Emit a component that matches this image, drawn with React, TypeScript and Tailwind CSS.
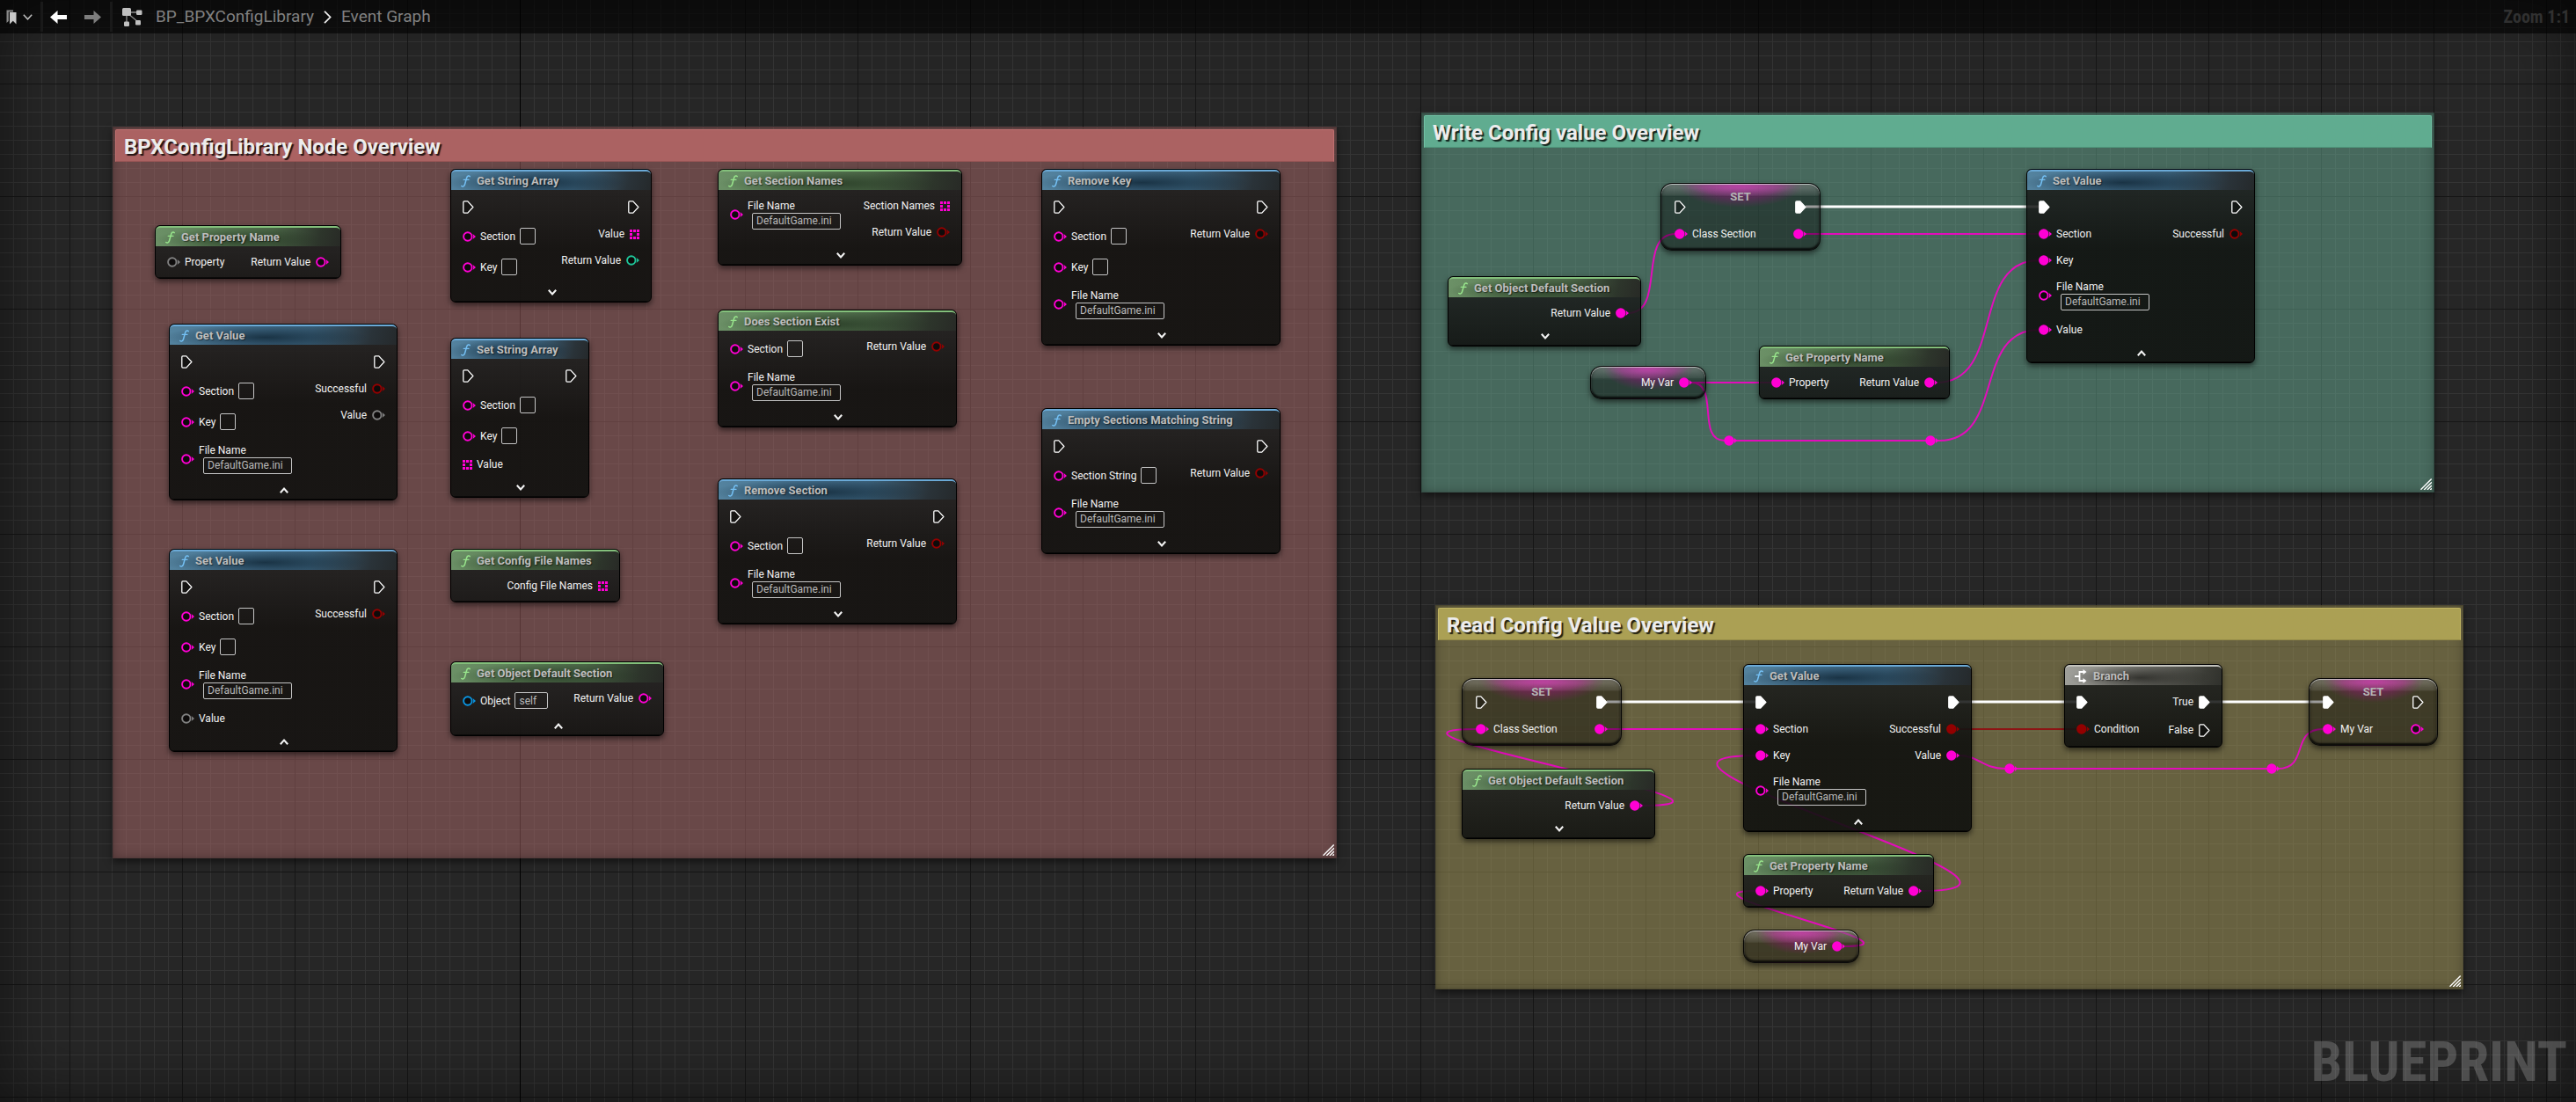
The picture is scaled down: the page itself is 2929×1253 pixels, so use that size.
import React, { useId } from "react";

type PinKind = "exec" | "circle" | "array";
type PinColor = "pink" | "red" | "gray" | "teal" | "blue";

type Pin = {
  label?: string;
  kind?: PinKind;
  color?: PinColor;
  linked?: boolean;
  field?: "empty" | "self" | "file";
};

const PIN_COLORS: Record<PinColor, string> = {
  pink: "#ff00d4",
  red: "#930000",
  gray: "#808080",
  teal: "#1fc79a",
  blue: "#0a94e0",
};

/* ---------- icons ---------- */

function PinIcon({ kind = "circle", color = "pink", linked }: Pin) {
  const c = PIN_COLORS[color];
  if (kind === "exec") {
    return (
      <svg width="13" height="15" viewBox="0 0 13 15" className="shrink-0">
        <path
          d="M1.8 0.9H5.8L11.9 7.5L5.8 14.1H1.8Q0.8 14.1 0.8 13.1V1.9Q0.8 0.9 1.8 0.9Z"
          fill={linked ? "#fff" : "rgba(0,0,0,0.35)"}
          stroke="#fff"
          strokeWidth="1.3"
          strokeLinejoin="round"
        />
      </svg>
    );
  }
  if (kind === "array") {
    return (
      <svg width="11" height="11" viewBox="0 0 11 11" className="shrink-0" fill={c}>
        <path d="M0 0h3v3H0zM4 0h3v3H4zM8 0h3v3H8zM0 4h3v3H0zM8 4h3v3H8zM0 8h3v3H0zM4 8h3v3H4zM8 8h3v3H8z" />
      </svg>
    );
  }
  return (
    <svg width="15" height="12" viewBox="0 0 15 12" className="shrink-0">
      <path d="M11.6 3L15 6L11.6 9Q12.8 6 11.6 3Z" fill={c} />
      {linked ? (
        <circle cx="5.8" cy="6" r="5.7" fill={c} />
      ) : (
        <circle cx="5.8" cy="6" r="4.7" fill="rgba(10,8,8,0.8)" stroke={c} strokeWidth="1.9" />
      )}
    </svg>
  );
}

function FunctionIcon({ color }: { color: string }) {
  return (
    <svg width="11" height="14" viewBox="0 0 11 14" fill="none" stroke={color} strokeLinecap="round">
      <path d="M10.2 1.7C9.6 0.6 7.4 0.4 6.7 3L4.5 10.8C4 12.8 2 13.6 0.8 12.5" strokeWidth="1.5" />
      <path d="M3.2 5.4H9" strokeWidth="1.2" />
    </svg>
  );
}

function BranchIcon() {
  return (
    <svg width="14" height="16" viewBox="0 0 14 16" fill="none" stroke="#fff" strokeWidth="1.8">
      <path d="M0 8H5M10 3H5.5V13H10" />
      <path d="M9.5 0L13.5 3L9.5 6ZM9.5 10L13.5 13L9.5 16Z" fill="#fff" stroke="none" />
    </svg>
  );
}

function Expander({ open }: { open: boolean }) {
  return (
    <button type="button" aria-label={open ? "Collapse node" : "Expand node"} className="flex h-[22px] w-full items-center justify-center pl-[2px]">
      <svg width="10" height="7" viewBox="0 0 10 7" fill="none" stroke="#f2f2f2" strokeWidth="2.1">
        <path d={open ? "M0.8 6.2L5 1.6L9.2 6.2" : "M0.8 0.8L5 5.4L9.2 0.8"} />
      </svg>
    </button>
  );
}

/* ---------- pins ---------- */

const FIELD = "h-[19px] rounded-[2px] border border-[#c4c4c4] bg-transparent text-[12px] leading-[17px] text-[#b9b9b9] outline-none";

function InputPin(pin: Pin) {
  const id = useId();
  if (pin.field === "file") {
    return (
      <div className="flex h-[49px] items-center gap-[5px]">
        <PinIcon {...pin} />
        <div className="flex flex-col">
          <label htmlFor={id} className="leading-[15px]">{pin.label}</label>
          <input id={id} defaultValue="DefaultGame.ini" className={`${FIELD} ml-[5px] w-[101px] pl-1`} />
        </div>
      </div>
    );
  }
  if (pin.field) {
    return (
      <div className="flex h-[35px] items-center gap-[5px]">
        <PinIcon {...pin} />
        <label htmlFor={id}>{pin.label}</label>
        <input
          id={id}
          defaultValue={pin.field === "self" ? "self" : ""}
          className={`${FIELD} ${pin.field === "self" ? "w-[38px] pl-1" : "w-[18px]"}`}
        />
      </div>
    );
  }
  return (
    <div className={`flex items-center gap-[5px] ${pin.kind === "exec" ? "h-8" : "h-[30px]"}`}>
      <PinIcon {...pin} />
      {pin.label && <span>{pin.label}</span>}
    </div>
  );
}

function OutputPin(pin: Pin) {
  return (
    <div className={`flex items-center justify-end gap-[6px] ${pin.kind === "exec" ? "h-8" : "h-[30px]"}`}>
      {pin.label && <span>{pin.label}</span>}
      <PinIcon {...pin} />
    </div>
  );
}

function Pins({ inputs, outputs }: { inputs: Pin[]; outputs: Pin[] }) {
  return (
    <div className="flex justify-between whitespace-nowrap">
      <div>{inputs.map((p, i) => <InputPin key={i} {...p} />)}</div>
      <div>{outputs.map((p, i) => <OutputPin key={i} {...p} />)}</div>
    </div>
  );
}

/* ---------- nodes ---------- */

const HEADERS = {
  blue: {
    bar: "border-t-[#6aa9d6] bg-[radial-gradient(ellipse_45%_70%_at_42%_60%,rgba(12,32,46,0.75),transparent),linear-gradient(105deg,#54839f_0%,#46718f_35%,#3b6079_62%,#2a3339_88%,#25292b_100%)]",
    icon: "#74c0f4",
  },
  green: {
    bar: "border-t-[#83bf7b] bg-[radial-gradient(ellipse_45%_70%_at_45%_65%,rgba(28,44,26,0.7),transparent),linear-gradient(105deg,#6c9167_0%,#5c7f57_35%,#4b6647_62%,#2d352b_88%,#282a26_100%)]",
    icon: "#98e58c",
  },
  gray: {
    bar: "border-t-[#c2c2bd] bg-[radial-gradient(ellipse_45%_70%_at_48%_60%,rgba(30,30,26,0.75),transparent),linear-gradient(105deg,#a0a09b_0%,#85857f_35%,#64645e_62%,#3b3c36_88%,#30312c_100%)]",
    icon: "#ffffff",
  },
};

type NodeProps = {
  at: string;
  title: string;
  tone: keyof typeof HEADERS;
  inputs?: Pin[];
  outputs?: Pin[];
  expander?: "open" | "closed";
};

function GraphNode({ at, title, tone, inputs = [], outputs = [], expander }: NodeProps) {
  const header = HEADERS[tone];
  return (
    <article
      className={`absolute overflow-hidden rounded-[6px] border border-black bg-[linear-gradient(to_bottom,rgba(27,29,28,0.88)_24px,rgba(15,16,14,0.9)_90px)] shadow-[0_3px_6px_rgba(0,0,0,0.55)] ${at}`}
    >
      <header className={`flex h-[23px] items-center gap-[7px] rounded-t-[5px] border-t-2 pl-[11px] ${header.bar}`}>
        {tone === "gray" ? <BranchIcon /> : <FunctionIcon color={header.icon} />}
        <h3 className="text-[13px] leading-4 font-bold whitespace-nowrap text-[#bdbdbd] [text-shadow:1px_1px_1px_rgba(0,0,0,0.5)]">{title}</h3>
      </header>
      <div className="px-[13px] pt-[3px]">
        <Pins inputs={inputs} outputs={outputs} />
      </div>
      {expander ? <Expander open={expander === "open"} /> : <div className="h-[3px]" />}
      <div className="-mt-px h-px bg-black/60" />
    </article>
  );
}

const GLASS =
  "absolute rounded-[13px] border border-black/90 bg-[radial-gradient(ellipse_36%_15px_at_50%_0,rgba(255,60,220,0.6),transparent),radial-gradient(ellipse_40%_27px_at_50%_0,rgba(200,0,160,0.28)_60%,transparent),linear-gradient(to_bottom,rgba(255,255,255,0.3)_0,rgba(255,255,255,0.08)_13px,transparent_14px),linear-gradient(rgba(0,0,0,0.38),rgba(0,0,0,0.4))] shadow-[inset_0_1px_1px_rgba(255,255,255,0.65),inset_0_-2px_2px_rgba(0,0,0,0.75),inset_0_0_4px_rgba(0,0,0,0.5),0_3px_6px_rgba(0,0,0,0.55)]";

function SetNode({ at, inputs, outputs }: { at: string; inputs: Pin[]; outputs: Pin[] }) {
  return (
    <article className={`${GLASS} px-[15px] pt-[10px] pb-[3px] ${at}`}>
      <h3 className="absolute inset-x-0 top-[7px] text-center text-[13px] leading-4 font-bold text-[#b4b4b4]">SET</h3>
      <Pins inputs={inputs} outputs={outputs} />
    </article>
  );
}

function VariableNode({ at }: { at: string }) {
  return (
    <article className={`${GLASS} px-[15px] py-[3px] ${at}`}>
      <Pins inputs={[]} outputs={[{ label: "My Var", linked: true }]} />
    </article>
  );
}

function Comment({ at, title, body, bar }: { at: string; title: string; body: string; bar: string }) {
  return (
    <section className={`absolute p-[3px] shadow-[inset_0_0_0_1px_rgba(0,0,0,0.12),inset_0_0_12px_rgba(0,0,0,0.3),0_4px_8px_rgba(0,0,0,0.5)] ${body} ${at}`}>
      <div className={`flex h-[37px] items-center rounded-t-[2px] border px-[9px] pt-[2px] ${bar}`}>
        <h2 className="text-[24px] leading-7 font-bold text-[#ececec] [text-shadow:2px_2px_1px_rgba(0,0,0,0.8)]">{title}</h2>
      </div>
      <svg width="13" height="13" viewBox="0 0 13 13" className="absolute right-[3px] bottom-[3px]" stroke="#fff" strokeWidth="1.4">
        <path d="M0.5 12.7L12.7 0.5M4.2 13L13 4.2M7.9 13L13 7.9M11.3 13L13 11.3" />
      </svg>
    </section>
  );
}

/* ---------- wires ---------- */

function Reroute({ x, y }: { x: number; y: number }) {
  return (
    <g fill="#ff00d4">
      <circle cx={x} cy={y} r="5.7" />
      <path d={`M${x + 6} ${y - 3}L${x + 9} ${y}L${x + 6} ${y + 3}Z`} />
    </g>
  );
}

function Wires() {
  return (
    <svg aria-hidden="true" className="absolute inset-0 h-full w-full" fill="none">
      <g stroke="#fff" strokeWidth="3">
        <path d="M2053 235H2320" />
        <path d="M1827 798H1998M2227 798H2362M2512 798H2642" />
      </g>
      <path d="M2227 829H2362" stroke="#8d1414" strokeWidth="2" />
      <g stroke="#e30cbb" strokeWidth="2">
        <path d="M2053 266H2320" />
        <path d="M1851 356C1895 356 1861 266 1905 266" />
        <path d="M1923 435H2015" />
        <path d="M1923 435C1956 435 1928 501 1961 501H2195" />
        <path d="M2201 501H2205C2280 501 2243 375 2318 375" />
        <path d="M2202 435C2280 435 2240 296 2318 296" />
        <path d="M1827 829H1998" />
        <path d="M1867 916C2040 916 1508 829 1680 829" />
        <path d="M2184 1013C2393 1013 1788 859 1997 859" />
        <path d="M2098 1076C2200 1076 1894 1013 1996 1013" />
        <path d="M2227 859C2250 859 2254 874 2280 874H2590C2626 874 2604 829 2641 829" />
      </g>
      <Reroute x={1966} y={501} />
      <Reroute x={2195} y={501} />
      <Reroute x={2285} y={874} />
      <Reroute x={2583} y={874} />
    </svg>
  );
}

/* ---------- toolbar ---------- */

function Toolbar() {
  return (
    <header className="relative z-10 flex h-[38px] items-center bg-black/60 pr-[7px] text-[19px] leading-6 text-[#808080]">
      <button type="button" aria-label="Bookmarks" className="flex items-center gap-[7px] pl-[7px]">
        <svg width="12" height="17" viewBox="0 0 12 17">
          <path d="M0.5 0.5H8V2.5H2.8V13L0.5 15Z" fill="#8a8a8a" />
          <path d="M4 3H11.5V16.5L7.8 12.8L4 16.5Z" fill="#c8c8c8" />
        </svg>
        <svg width="11" height="7" viewBox="0 0 11 7" fill="none" stroke="#c0c0c0" strokeWidth="1.5">
          <path d="M0.8 0.8L5.5 5.8L10.2 0.8" />
        </svg>
      </button>
      <div className="ml-[9px] h-[34px] w-[3px] bg-[#191919]" />
      <button type="button" aria-label="Back" className="ml-2">
        <svg width="19" height="15" viewBox="0 0 19 15" fill="#fff">
          <path d="M0 7.5L8.5 0V5H19V10H8.5V15Z" />
        </svg>
      </button>
      <button type="button" aria-label="Forward" className="ml-5">
        <svg width="19" height="15" viewBox="0 0 19 15" fill="#7d7d7d">
          <path d="M19 7.5L10.5 0V5H0V10H10.5V15Z" />
        </svg>
      </button>
      <div className="ml-[10px] h-[34px] w-[3px] bg-[#191919]" />
      <nav aria-label="Breadcrumb" className="flex items-center">
        <svg width="23" height="21" viewBox="0 0 23 21" className="ml-[11px]">
          <path d="M5 5H18M5 5V17M6 6L18 16" stroke="#8a8a8a" strokeWidth="1.3" fill="none" />
          <g fill="#c0c0c0">
            <rect x="0" y="0" width="10" height="9" rx="1.5" />
            <rect x="16" y="2.5" width="6.5" height="5.5" rx="1.2" />
            <rect x="2" y="15.5" width="6" height="5.5" rx="1.2" />
            <rect x="15" y="14" width="6" height="5.5" rx="1.2" />
          </g>
        </svg>
        <a href="#library" className="ml-[15px]">BP_BPXConfigLibrary</a>
        <svg width="9" height="15" viewBox="0 0 9 15" fill="none" stroke="#f0f0f0" strokeWidth="1.7" className="mx-[11px]">
          <path d="M1 0.8L7.6 7.5L1 14.2" />
        </svg>
        <a href="#graph">Event Graph</a>
      </nav>
      <div className="ml-auto font-['Roboto_Condensed','Roboto',sans-serif] text-[20px] font-bold text-[#303030]">Zoom 1:1</div>
    </header>
  );
}

/* ---------- graph ---------- */

const exec: Pin = { kind: "exec" };
const execLinked: Pin = { kind: "exec", linked: true };
const section: Pin = { label: "Section", field: "empty" };
const key: Pin = { label: "Key", field: "empty" };
const file: Pin = { label: "File Name", field: "file" };
const returnBool: Pin = { label: "Return Value", color: "red" };

export default function App() {
  return (
    <main className="relative h-screen min-h-full w-full overflow-hidden bg-[#262626] font-['Roboto',sans-serif] text-[12px] leading-4 text-[#f2f2f2]">
      <div className="absolute inset-0 bg-[linear-gradient(to_right,#161616_1px,transparent_1px),linear-gradient(to_bottom,#161616_1px,transparent_1px),linear-gradient(to_right,#343434_1px,transparent_1px),linear-gradient(to_bottom,#343434_1px,transparent_1px)] [background-position:79px_0,0_95px,15px_0,0_15px] [background-size:128px_128px,128px_128px,16px_16px,16px_16px]" />
      <div className="absolute inset-y-0 left-[591px] w-px bg-black" />
      <div className="absolute inset-0 shadow-[inset_0_0_70px_rgba(0,0,0,0.55)]" />
      <Toolbar />
      <div className="pointer-events-none absolute right-[10px] bottom-[7px] font-['Roboto_Condensed','Liberation_Sans_Narrow','Roboto',sans-serif] text-[63px] leading-[76px] font-bold text-white/20">
        BLUEPRINT
      </div>

      <div className="absolute inset-0">
        <Comment at="left-[128px] top-[144px] w-[1392px] h-[832px]" title="BPXConfigLibrary Node Overview" body="bg-[rgba(171,106,106,0.5)]" bar="border-[#c07070] border-b-[#985555] bg-[#ab6262]" />
        <Comment at="left-[1616px] top-[128px] w-[1152px] h-[432px]" title="Write Config value Overview" body="bg-[rgba(104,172,148,0.5)]" bar="border-[#70c2a4] border-b-[#4f967b] bg-[#60ac90]" />
        <Comment at="left-[1632px] top-[688px] w-[1169px] h-[437px]" title="Read Config Value Overview" body="bg-[rgba(168,156,90,0.5)]" bar="border-[#c2b562] border-b-[#958b48] bg-[#aba054]" />

        <Wires />

        <GraphNode at="left-[176px] top-[256px] w-[212px]" title="Get Property Name" tone="green" inputs={[{ label: "Property", color: "gray" }]} outputs={[{ label: "Return Value" }]} />
        <GraphNode at="left-[192px] top-[368px] w-[260px]" title="Get Value" tone="blue" expander="open" inputs={[exec, section, key, file]} outputs={[exec, { label: "Successful", color: "red" }, { label: "Value", color: "gray" }]} />
        <GraphNode at="left-[192px] top-[624px] w-[260px]" title="Set Value" tone="blue" expander="open" inputs={[exec, section, key, file, { label: "Value", color: "gray" }]} outputs={[exec, { label: "Successful", color: "red" }]} />
        <GraphNode at="left-[512px] top-[192px] w-[229px]" title="Get String Array" tone="blue" expander="closed" inputs={[exec, section, key]} outputs={[exec, { label: "Value", kind: "array" }, { label: "Return Value", color: "teal" }]} />
        <GraphNode at="left-[512px] top-[384px] w-[158px]" title="Set String Array" tone="blue" expander="closed" inputs={[exec, section, key, { label: "Value", kind: "array" }]} outputs={[exec]} />
        <GraphNode at="left-[512px] top-[624px] w-[193px]" title="Get Config File Names" tone="green" outputs={[{ label: "Config File Names", kind: "array" }]} />
        <GraphNode at="left-[512px] top-[752px] w-[243px]" title="Get Object Default Section" tone="green" expander="open" inputs={[{ label: "Object", color: "blue", field: "self" }]} outputs={[{ label: "Return Value" }]} />
        <GraphNode at="left-[816px] top-[192px] w-[278px]" title="Get Section Names" tone="green" expander="closed" inputs={[file]} outputs={[{ label: "Section Names", kind: "array" }, returnBool]} />
        <GraphNode at="left-[816px] top-[352px] w-[272px]" title="Does Section Exist" tone="green" expander="closed" inputs={[section, file]} outputs={[returnBool]} />
        <GraphNode at="left-[816px] top-[544px] w-[272px]" title="Remove Section" tone="blue" expander="closed" inputs={[exec, section, file]} outputs={[exec, returnBool]} />
        <GraphNode at="left-[1184px] top-[192px] w-[272px]" title="Remove Key" tone="blue" expander="closed" inputs={[exec, section, key, file]} outputs={[exec, returnBool]} />
        <GraphNode at="left-[1184px] top-[464px] w-[272px]" title="Empty Sections Matching String" tone="blue" expander="closed" inputs={[exec, { label: "Section String", field: "empty" }, file]} outputs={[exec, returnBool]} />

        <SetNode at="left-[1888px] top-[208px] w-[182px]" inputs={[exec, { label: "Class Section", linked: true }]} outputs={[execLinked, { linked: true }]} />
        <GraphNode at="left-[1646px] top-[314px] w-[220px]" title="Get Object Default Section" tone="green" expander="closed" outputs={[{ label: "Return Value", linked: true }]} />
        <VariableNode at="left-[1808px] top-[416px] w-[132px]" />
        <GraphNode at="left-[2000px] top-[393px] w-[217px]" title="Get Property Name" tone="green" inputs={[{ label: "Property", linked: true }]} outputs={[{ label: "Return Value", linked: true }]} />
        <GraphNode at="left-[2304px] top-[192px] w-[260px]" title="Set Value" tone="blue" expander="open" inputs={[execLinked, { label: "Section", linked: true }, { label: "Key", linked: true }, file, { label: "Value", linked: true }]} outputs={[exec, { label: "Successful", color: "red" }]} />

        <SetNode at="left-[1662px] top-[771px] w-[182px]" inputs={[exec, { label: "Class Section", linked: true }]} outputs={[execLinked, { linked: true }]} />
        <GraphNode at="left-[1662px] top-[874px] w-[220px]" title="Get Object Default Section" tone="green" expander="closed" outputs={[{ label: "Return Value", linked: true }]} />
        <GraphNode at="left-[1982px] top-[755px] w-[260px]" title="Get Value" tone="blue" expander="open" inputs={[execLinked, { label: "Section", linked: true }, { label: "Key", linked: true }, file]} outputs={[execLinked, { label: "Successful", color: "red", linked: true }, { label: "Value", linked: true }]} />
        <GraphNode at="left-[1982px] top-[971px] w-[217px]" title="Get Property Name" tone="green" inputs={[{ label: "Property", linked: true }]} outputs={[{ label: "Return Value", linked: true }]} />
        <VariableNode at="left-[1982px] top-[1057px] w-[132px]" />
        <GraphNode at="left-[2347px] top-[755px] w-[180px]" title="Branch" tone="gray" inputs={[execLinked, { label: "Condition", color: "red", linked: true }]} outputs={[{ ...execLinked, label: "True" }, { ...exec, label: "False" }]} />
        <SetNode at="left-[2625px] top-[771px] w-[147px]" inputs={[execLinked, { label: "My Var", linked: true }]} outputs={[exec, {}]} />
      </div>
    </main>
  );
}
